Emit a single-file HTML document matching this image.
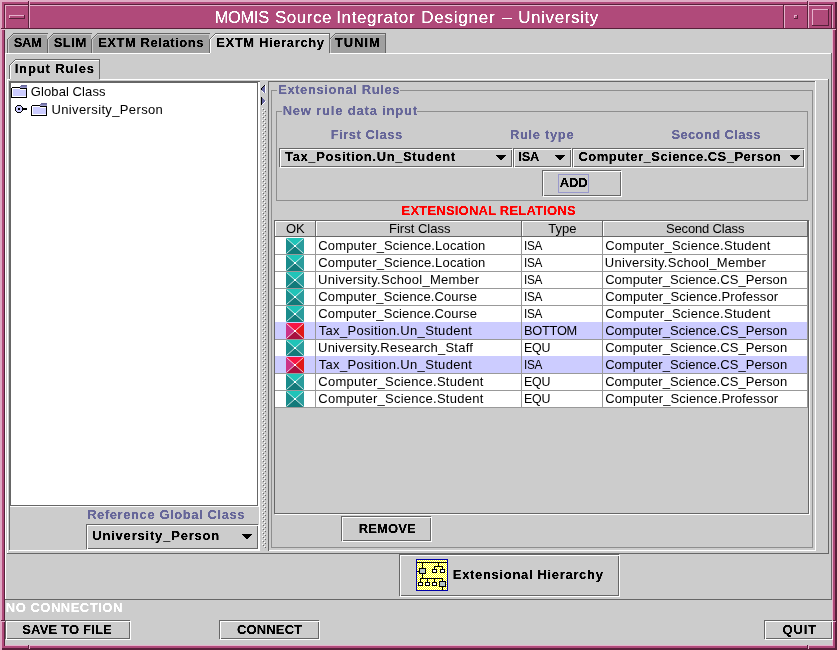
<!DOCTYPE html>
<html><head><meta charset="utf-8"><title>MOMIS</title>
<style>html,body{margin:0;padding:0;width:837px;height:650px;overflow:hidden;background:#cccccc;font-family:"Liberation Sans",sans-serif}</style>
</head><body><svg width="837" height="650" viewBox="0 0 837 650" shape-rendering="crispEdges" style="display:block;will-change:transform;font-family:'Liberation Sans',sans-serif"><defs><pattern id="ydith" x="0" y="0" width="2" height="2" patternUnits="userSpaceOnUse"><rect width="2" height="2" fill="#ffff00"/><rect width="1" height="1" fill="#ffffff"/><rect x="1" y="1" width="1" height="1" fill="#ffffff"/></pattern><filter id="crisp" x="0" y="0" width="837" height="650" filterUnits="userSpaceOnUse"><feComponentTransfer><feFuncA type="linear" slope="2.2" intercept="-0.35"/></feComponentTransfer></filter><filter id="crisp2" x="0" y="0" width="837" height="650" filterUnits="userSpaceOnUse"><feComponentTransfer><feFuncA type="linear" slope="1.0" intercept="0"/></feComponentTransfer></filter></defs><rect x="0" y="0" width="837" height="650" fill="#dfaac4"/><rect x="2" y="2" width="833" height="646" fill="#b04a7a"/><rect x="2" y="2" width="835" height="648" fill="#b04a7a"/><rect x="835" y="2" width="2" height="648" fill="#58203a"/><rect x="2" y="648" width="835" height="2" fill="#58203a"/><rect x="4" y="4" width="829" height="642" fill="#58203a"/><rect x="5" y="5" width="828" height="641" fill="#e6b2cc"/><rect x="5" y="5" width="827" height="640" fill="#cccccc"/><rect x="5" y="5" width="827" height="24" fill="#b04a7a"/><rect x="5" y="5" width="23" height="1" fill="#e6b2cc"/><rect x="5" y="5" width="1" height="23" fill="#e6b2cc"/><rect x="5" y="28" width="24" height="1" fill="#58203a"/><rect x="28" y="1" width="1" height="28" fill="#58203a"/><rect x="29" y="1" width="1" height="29" fill="#e6b2cc"/><rect x="9" y="15" width="15" height="1" fill="#e6b2cc"/><rect x="9" y="15" width="1" height="3" fill="#e6b2cc"/><rect x="9" y="18" width="16" height="1" fill="#58203a"/><rect x="24" y="15" width="1" height="4" fill="#58203a"/><rect x="29" y="5" width="754" height="1" fill="#e6b2cc"/><rect x="29" y="28" width="755" height="1" fill="#58203a"/><rect x="783" y="5" width="1" height="24" fill="#58203a"/><rect x="784" y="5" width="1" height="24" fill="#e6b2cc"/><rect x="784" y="5" width="23" height="1" fill="#e6b2cc"/><rect x="784" y="28" width="24" height="1" fill="#58203a"/><rect x="807" y="1" width="1" height="28" fill="#58203a"/><rect x="808" y="1" width="1" height="28" fill="#e6b2cc"/><rect x="794" y="15" width="3" height="1" fill="#e6b2cc"/><rect x="794" y="15" width="1" height="3" fill="#e6b2cc"/><rect x="794" y="18" width="4" height="1" fill="#58203a"/><rect x="797" y="15" width="1" height="4" fill="#58203a"/><rect x="808" y="5" width="23" height="1" fill="#e6b2cc"/><rect x="808" y="28" width="24" height="1" fill="#58203a"/><rect x="831" y="5" width="1" height="24" fill="#58203a"/><rect x="812" y="9" width="16" height="1" fill="#e6b2cc"/><rect x="812" y="9" width="1" height="16" fill="#e6b2cc"/><rect x="812" y="25" width="17" height="1" fill="#58203a"/><rect x="828" y="9" width="1" height="17" fill="#58203a"/><rect x="1" y="28" width="4" height="1" fill="#58203a"/><rect x="1" y="29" width="4" height="1" fill="#e6b2cc"/><rect x="832" y="28" width="4" height="1" fill="#58203a"/><rect x="832" y="29" width="4" height="1" fill="#e6b2cc"/><rect x="1" y="620" width="4" height="1" fill="#58203a"/><rect x="1" y="621" width="4" height="1" fill="#e6b2cc"/><rect x="832" y="620" width="4" height="1" fill="#58203a"/><rect x="832" y="621" width="4" height="1" fill="#e6b2cc"/><rect x="28" y="645" width="1" height="4" fill="#58203a"/><rect x="29" y="645" width="1" height="4" fill="#e6b2cc"/><rect x="807" y="645" width="1" height="4" fill="#58203a"/><rect x="808" y="645" width="1" height="4" fill="#e6b2cc"/><rect x="502" y="18" width="10" height="1" fill="#ffffff"/><rect x="5" y="33" width="826" height="20" fill="#cccccc"/><rect x="8" y="34" width="39" height="19" fill="#a0a0a0"/><rect x="8" y="33" width="6" height="1" fill="#cccccc"/><rect x="8" y="34" width="5" height="1" fill="#cccccc"/><rect x="8" y="35" width="4" height="1" fill="#cccccc"/><rect x="8" y="36" width="3" height="1" fill="#cccccc"/><rect x="8" y="37" width="2" height="1" fill="#cccccc"/><rect x="8" y="38" width="1" height="1" fill="#cccccc"/><rect x="7" y="39" width="1" height="14" fill="#666666"/><rect x="8" y="38" width="1" height="1" fill="#666666"/><rect x="9" y="37" width="1" height="1" fill="#666666"/><rect x="10" y="36" width="1" height="1" fill="#666666"/><rect x="11" y="35" width="1" height="1" fill="#666666"/><rect x="12" y="34" width="1" height="1" fill="#666666"/><rect x="13" y="33" width="1" height="1" fill="#666666"/><rect x="13" y="33" width="35" height="1" fill="#666666"/><rect x="8" y="39" width="1" height="14" fill="#cccccc"/><rect x="8" y="39" width="1" height="1" fill="#cccccc"/><rect x="9" y="38" width="1" height="1" fill="#cccccc"/><rect x="10" y="37" width="1" height="1" fill="#cccccc"/><rect x="11" y="36" width="1" height="1" fill="#cccccc"/><rect x="12" y="35" width="1" height="1" fill="#cccccc"/><rect x="13" y="34" width="1" height="1" fill="#cccccc"/><rect x="13" y="34" width="34" height="1" fill="#cccccc"/><rect x="48" y="34" width="43" height="19" fill="#a0a0a0"/><rect x="48" y="33" width="6" height="1" fill="#cccccc"/><rect x="48" y="34" width="5" height="1" fill="#cccccc"/><rect x="48" y="35" width="4" height="1" fill="#cccccc"/><rect x="48" y="36" width="3" height="1" fill="#cccccc"/><rect x="48" y="37" width="2" height="1" fill="#cccccc"/><rect x="48" y="38" width="1" height="1" fill="#cccccc"/><rect x="47" y="39" width="1" height="14" fill="#666666"/><rect x="48" y="38" width="1" height="1" fill="#666666"/><rect x="49" y="37" width="1" height="1" fill="#666666"/><rect x="50" y="36" width="1" height="1" fill="#666666"/><rect x="51" y="35" width="1" height="1" fill="#666666"/><rect x="52" y="34" width="1" height="1" fill="#666666"/><rect x="53" y="33" width="1" height="1" fill="#666666"/><rect x="53" y="33" width="39" height="1" fill="#666666"/><rect x="48" y="39" width="1" height="14" fill="#cccccc"/><rect x="48" y="39" width="1" height="1" fill="#cccccc"/><rect x="49" y="38" width="1" height="1" fill="#cccccc"/><rect x="50" y="37" width="1" height="1" fill="#cccccc"/><rect x="51" y="36" width="1" height="1" fill="#cccccc"/><rect x="52" y="35" width="1" height="1" fill="#cccccc"/><rect x="53" y="34" width="1" height="1" fill="#cccccc"/><rect x="53" y="34" width="38" height="1" fill="#cccccc"/><rect x="92" y="34" width="117" height="19" fill="#a0a0a0"/><rect x="92" y="33" width="6" height="1" fill="#cccccc"/><rect x="92" y="34" width="5" height="1" fill="#cccccc"/><rect x="92" y="35" width="4" height="1" fill="#cccccc"/><rect x="92" y="36" width="3" height="1" fill="#cccccc"/><rect x="92" y="37" width="2" height="1" fill="#cccccc"/><rect x="92" y="38" width="1" height="1" fill="#cccccc"/><rect x="91" y="39" width="1" height="14" fill="#666666"/><rect x="92" y="38" width="1" height="1" fill="#666666"/><rect x="93" y="37" width="1" height="1" fill="#666666"/><rect x="94" y="36" width="1" height="1" fill="#666666"/><rect x="95" y="35" width="1" height="1" fill="#666666"/><rect x="96" y="34" width="1" height="1" fill="#666666"/><rect x="97" y="33" width="1" height="1" fill="#666666"/><rect x="97" y="33" width="113" height="1" fill="#666666"/><rect x="92" y="39" width="1" height="14" fill="#cccccc"/><rect x="92" y="39" width="1" height="1" fill="#cccccc"/><rect x="93" y="38" width="1" height="1" fill="#cccccc"/><rect x="94" y="37" width="1" height="1" fill="#cccccc"/><rect x="95" y="36" width="1" height="1" fill="#cccccc"/><rect x="96" y="35" width="1" height="1" fill="#cccccc"/><rect x="97" y="34" width="1" height="1" fill="#cccccc"/><rect x="97" y="34" width="112" height="1" fill="#cccccc"/><rect x="330" y="34" width="55" height="19" fill="#a0a0a0"/><rect x="330" y="33" width="6" height="1" fill="#cccccc"/><rect x="330" y="34" width="5" height="1" fill="#cccccc"/><rect x="330" y="35" width="4" height="1" fill="#cccccc"/><rect x="330" y="36" width="3" height="1" fill="#cccccc"/><rect x="330" y="37" width="2" height="1" fill="#cccccc"/><rect x="330" y="38" width="1" height="1" fill="#cccccc"/><rect x="329" y="39" width="1" height="14" fill="#666666"/><rect x="330" y="38" width="1" height="1" fill="#666666"/><rect x="331" y="37" width="1" height="1" fill="#666666"/><rect x="332" y="36" width="1" height="1" fill="#666666"/><rect x="333" y="35" width="1" height="1" fill="#666666"/><rect x="334" y="34" width="1" height="1" fill="#666666"/><rect x="335" y="33" width="1" height="1" fill="#666666"/><rect x="335" y="33" width="51" height="1" fill="#666666"/><rect x="385" y="34" width="1" height="19" fill="#666666"/><rect x="330" y="39" width="1" height="14" fill="#cccccc"/><rect x="330" y="39" width="1" height="1" fill="#cccccc"/><rect x="331" y="38" width="1" height="1" fill="#cccccc"/><rect x="332" y="37" width="1" height="1" fill="#cccccc"/><rect x="333" y="36" width="1" height="1" fill="#cccccc"/><rect x="334" y="35" width="1" height="1" fill="#cccccc"/><rect x="335" y="34" width="1" height="1" fill="#cccccc"/><rect x="335" y="34" width="50" height="1" fill="#cccccc"/><rect x="210" y="34" width="119" height="19" fill="#cccccc"/><rect x="210" y="33" width="6" height="1" fill="#cccccc"/><rect x="210" y="34" width="5" height="1" fill="#cccccc"/><rect x="210" y="35" width="4" height="1" fill="#cccccc"/><rect x="210" y="36" width="3" height="1" fill="#cccccc"/><rect x="210" y="37" width="2" height="1" fill="#cccccc"/><rect x="210" y="38" width="1" height="1" fill="#cccccc"/><rect x="209" y="39" width="1" height="14" fill="#666666"/><rect x="210" y="38" width="1" height="1" fill="#666666"/><rect x="211" y="37" width="1" height="1" fill="#666666"/><rect x="212" y="36" width="1" height="1" fill="#666666"/><rect x="213" y="35" width="1" height="1" fill="#666666"/><rect x="214" y="34" width="1" height="1" fill="#666666"/><rect x="215" y="33" width="1" height="1" fill="#666666"/><rect x="215" y="33" width="115" height="1" fill="#666666"/><rect x="210" y="39" width="1" height="14" fill="#ffffff"/><rect x="210" y="39" width="1" height="1" fill="#ffffff"/><rect x="211" y="38" width="1" height="1" fill="#ffffff"/><rect x="212" y="37" width="1" height="1" fill="#ffffff"/><rect x="213" y="36" width="1" height="1" fill="#ffffff"/><rect x="214" y="35" width="1" height="1" fill="#ffffff"/><rect x="215" y="34" width="1" height="1" fill="#ffffff"/><rect x="215" y="34" width="114" height="1" fill="#ffffff"/><rect x="329" y="34" width="1" height="19" fill="#666666"/><rect x="5" y="53" width="205" height="1" fill="#ffffff"/><rect x="330" y="53" width="501" height="1" fill="#ffffff"/><rect x="5" y="53" width="1" height="546" fill="#ffffff"/><rect x="5" y="599" width="827" height="1" fill="#666666"/><rect x="831" y="53" width="1" height="547" fill="#666666"/><rect x="10" y="60" width="89" height="19" fill="#cccccc"/><rect x="10" y="59" width="6" height="1" fill="#cccccc"/><rect x="10" y="60" width="5" height="1" fill="#cccccc"/><rect x="10" y="61" width="4" height="1" fill="#cccccc"/><rect x="10" y="62" width="3" height="1" fill="#cccccc"/><rect x="10" y="63" width="2" height="1" fill="#cccccc"/><rect x="10" y="64" width="1" height="1" fill="#cccccc"/><rect x="9" y="65" width="1" height="14" fill="#666666"/><rect x="10" y="64" width="1" height="1" fill="#666666"/><rect x="11" y="63" width="1" height="1" fill="#666666"/><rect x="12" y="62" width="1" height="1" fill="#666666"/><rect x="13" y="61" width="1" height="1" fill="#666666"/><rect x="14" y="60" width="1" height="1" fill="#666666"/><rect x="15" y="59" width="1" height="1" fill="#666666"/><rect x="15" y="59" width="85" height="1" fill="#666666"/><rect x="99" y="60" width="1" height="19" fill="#666666"/><rect x="10" y="65" width="1" height="14" fill="#ffffff"/><rect x="10" y="65" width="1" height="1" fill="#ffffff"/><rect x="11" y="64" width="1" height="1" fill="#ffffff"/><rect x="12" y="63" width="1" height="1" fill="#ffffff"/><rect x="13" y="62" width="1" height="1" fill="#ffffff"/><rect x="14" y="61" width="1" height="1" fill="#ffffff"/><rect x="15" y="60" width="1" height="1" fill="#ffffff"/><rect x="15" y="60" width="84" height="1" fill="#ffffff"/><rect x="7" y="79" width="3" height="1" fill="#ffffff"/><rect x="100" y="79" width="728" height="1" fill="#ffffff"/><rect x="7" y="79" width="1" height="474" fill="#ffffff"/><rect x="7" y="553" width="822" height="1" fill="#666666"/><rect x="828" y="79" width="1" height="475" fill="#666666"/><rect x="11" y="83" width="246" height="422" fill="#ffffff"/><rect x="9" y="81" width="1" height="469" fill="#666666"/><rect x="9" y="81" width="251" height="1" fill="#666666"/><rect x="10" y="82" width="1" height="424" fill="#666666"/><rect x="10" y="82" width="248" height="1" fill="#666666"/><rect x="257" y="82" width="1" height="424" fill="#666666"/><rect x="10" y="505" width="248" height="1" fill="#666666"/><rect x="258" y="82" width="1" height="425" fill="#ffffff"/><rect x="10" y="506" width="249" height="1" fill="#ffffff"/><rect x="259" y="82" width="1" height="469" fill="#ffffff"/><rect x="9" y="550" width="251" height="1" fill="#ffffff"/><rect x="21" y="85" width="6" height="1" fill="#666699"/><rect x="20" y="86" width="7" height="1" fill="#7a7ab0"/><rect x="12" y="87" width="8" height="1" fill="#000"/><rect x="20" y="87" width="7" height="1" fill="#9999cc"/><rect x="20" y="88" width="7" height="1" fill="#000"/><rect x="12" y="88" width="8" height="1" fill="#ffffff"/><rect x="11" y="88" width="1" height="10" fill="#000"/><rect x="26" y="88" width="1" height="10" fill="#000"/><rect x="12" y="89" width="1" height="8" fill="#ffffff"/><rect x="13" y="89" width="7" height="1" fill="#ccccff"/><rect x="20" y="89" width="6" height="1" fill="#ffffff"/><rect x="13" y="90" width="13" height="6" fill="#ccccff"/><rect x="12" y="96" width="14" height="1" fill="#ffffff"/><rect x="11" y="97" width="16" height="1" fill="#000"/><rect x="41" y="103" width="6" height="1" fill="#666699"/><rect x="40" y="104" width="7" height="1" fill="#7a7ab0"/><rect x="32" y="105" width="8" height="1" fill="#000"/><rect x="40" y="105" width="7" height="1" fill="#9999cc"/><rect x="40" y="106" width="7" height="1" fill="#000"/><rect x="32" y="106" width="8" height="1" fill="#ffffff"/><rect x="31" y="106" width="1" height="10" fill="#000"/><rect x="46" y="106" width="1" height="10" fill="#000"/><rect x="32" y="107" width="1" height="8" fill="#ffffff"/><rect x="33" y="107" width="7" height="1" fill="#ccccff"/><rect x="40" y="107" width="6" height="1" fill="#ffffff"/><rect x="33" y="108" width="13" height="6" fill="#ccccff"/><rect x="32" y="114" width="14" height="1" fill="#ffffff"/><rect x="31" y="115" width="16" height="1" fill="#000"/><rect x="17" y="105" width="4" height="1" fill="#000"/><rect x="17" y="112" width="4" height="1" fill="#000"/><rect x="16" y="106" width="1" height="1" fill="#000"/><rect x="21" y="106" width="1" height="1" fill="#000"/><rect x="16" y="111" width="1" height="1" fill="#000"/><rect x="21" y="111" width="1" height="1" fill="#000"/><rect x="15" y="107" width="1" height="4" fill="#000"/><rect x="22" y="107" width="1" height="4" fill="#000"/><rect x="17" y="106" width="4" height="6" fill="#ccccff"/><rect x="16" y="107" width="6" height="4" fill="#ccccff"/><rect x="18" y="108" width="2" height="2" fill="#000"/><rect x="23" y="108" width="4" height="2" fill="#000"/><rect x="86" y="524" width="172" height="1" fill="#666666"/><rect x="86" y="524" width="1" height="25" fill="#666666"/><rect x="86" y="548" width="172" height="1" fill="#666666"/><rect x="257" y="524" width="1" height="25" fill="#666666"/><rect x="87" y="525" width="172" height="1" fill="#ffffff"/><rect x="87" y="525" width="1" height="25" fill="#ffffff"/><rect x="87" y="549" width="172" height="1" fill="#ffffff"/><rect x="258" y="525" width="1" height="25" fill="#ffffff"/><rect x="86" y="549" width="1" height="1" fill="#cccccc"/><rect x="258" y="524" width="1" height="1" fill="#cccccc"/><rect x="242" y="534" width="10" height="1" fill="#000"/><rect x="243" y="535" width="8" height="1" fill="#000"/><rect x="244" y="536" width="6" height="1" fill="#000"/><rect x="245" y="537" width="4" height="1" fill="#000"/><rect x="246" y="538" width="2" height="1" fill="#000"/><rect x="264" y="85" width="1" height="1" fill="#6666a0"/><rect x="263" y="86" width="2" height="1" fill="#6666a0"/><rect x="262" y="87" width="3" height="1" fill="#6666a0"/><rect x="261" y="88" width="4" height="1" fill="#6666a0"/><rect x="261" y="89" width="4" height="1" fill="#6666a0"/><rect x="262" y="90" width="3" height="1" fill="#6666a0"/><rect x="263" y="91" width="2" height="1" fill="#6666a0"/><rect x="264" y="92" width="1" height="1" fill="#6666a0"/><rect x="264" y="85" width="1" height="1" fill="#000"/><rect x="263" y="86" width="1" height="1" fill="#000"/><rect x="262" y="87" width="1" height="1" fill="#000"/><rect x="261" y="88" width="1" height="1" fill="#000"/><rect x="261" y="89" width="1" height="1" fill="#000"/><rect x="265" y="85" width="1" height="8" fill="#ffffff"/><rect x="262" y="91" width="1" height="1" fill="#ffffff"/><rect x="263" y="92" width="1" height="1" fill="#ffffff"/><rect x="262" y="98" width="1" height="1" fill="#6666a0"/><rect x="262" y="99" width="2" height="1" fill="#6666a0"/><rect x="262" y="100" width="3" height="1" fill="#6666a0"/><rect x="262" y="101" width="3" height="1" fill="#6666a0"/><rect x="262" y="102" width="2" height="1" fill="#6666a0"/><rect x="262" y="103" width="1" height="1" fill="#6666a0"/><rect x="261" y="97" width="1" height="8" fill="#000"/><rect x="262" y="104" width="1" height="1" fill="#ffffff"/><rect x="263" y="103" width="1" height="1" fill="#ffffff"/><rect x="264" y="102" width="1" height="1" fill="#ffffff"/><rect x="265" y="101" width="1" height="1" fill="#ffffff"/><rect x="262" y="108" width="1" height="1" fill="#ffffff"/><rect x="263" y="109" width="1" height="1" fill="#666666"/><rect x="264" y="110" width="1" height="1" fill="#ffffff"/><rect x="265" y="111" width="1" height="1" fill="#666666"/><rect x="262" y="112" width="1" height="1" fill="#ffffff"/><rect x="263" y="113" width="1" height="1" fill="#666666"/><rect x="264" y="114" width="1" height="1" fill="#ffffff"/><rect x="265" y="115" width="1" height="1" fill="#666666"/><rect x="262" y="116" width="1" height="1" fill="#ffffff"/><rect x="263" y="117" width="1" height="1" fill="#666666"/><rect x="264" y="118" width="1" height="1" fill="#ffffff"/><rect x="265" y="119" width="1" height="1" fill="#666666"/><rect x="262" y="120" width="1" height="1" fill="#ffffff"/><rect x="263" y="121" width="1" height="1" fill="#666666"/><rect x="264" y="122" width="1" height="1" fill="#ffffff"/><rect x="265" y="123" width="1" height="1" fill="#666666"/><rect x="262" y="124" width="1" height="1" fill="#ffffff"/><rect x="263" y="125" width="1" height="1" fill="#666666"/><rect x="264" y="126" width="1" height="1" fill="#ffffff"/><rect x="265" y="127" width="1" height="1" fill="#666666"/><rect x="262" y="128" width="1" height="1" fill="#ffffff"/><rect x="263" y="129" width="1" height="1" fill="#666666"/><rect x="264" y="130" width="1" height="1" fill="#ffffff"/><rect x="265" y="131" width="1" height="1" fill="#666666"/><rect x="262" y="132" width="1" height="1" fill="#ffffff"/><rect x="263" y="133" width="1" height="1" fill="#666666"/><rect x="264" y="134" width="1" height="1" fill="#ffffff"/><rect x="265" y="135" width="1" height="1" fill="#666666"/><rect x="262" y="136" width="1" height="1" fill="#ffffff"/><rect x="263" y="137" width="1" height="1" fill="#666666"/><rect x="264" y="138" width="1" height="1" fill="#ffffff"/><rect x="265" y="139" width="1" height="1" fill="#666666"/><rect x="262" y="140" width="1" height="1" fill="#ffffff"/><rect x="263" y="141" width="1" height="1" fill="#666666"/><rect x="264" y="142" width="1" height="1" fill="#ffffff"/><rect x="265" y="143" width="1" height="1" fill="#666666"/><rect x="262" y="144" width="1" height="1" fill="#ffffff"/><rect x="263" y="145" width="1" height="1" fill="#666666"/><rect x="264" y="146" width="1" height="1" fill="#ffffff"/><rect x="265" y="147" width="1" height="1" fill="#666666"/><rect x="262" y="148" width="1" height="1" fill="#ffffff"/><rect x="263" y="149" width="1" height="1" fill="#666666"/><rect x="264" y="150" width="1" height="1" fill="#ffffff"/><rect x="265" y="151" width="1" height="1" fill="#666666"/><rect x="262" y="152" width="1" height="1" fill="#ffffff"/><rect x="263" y="153" width="1" height="1" fill="#666666"/><rect x="264" y="154" width="1" height="1" fill="#ffffff"/><rect x="265" y="155" width="1" height="1" fill="#666666"/><rect x="262" y="156" width="1" height="1" fill="#ffffff"/><rect x="263" y="157" width="1" height="1" fill="#666666"/><rect x="264" y="158" width="1" height="1" fill="#ffffff"/><rect x="265" y="159" width="1" height="1" fill="#666666"/><rect x="262" y="160" width="1" height="1" fill="#ffffff"/><rect x="263" y="161" width="1" height="1" fill="#666666"/><rect x="264" y="162" width="1" height="1" fill="#ffffff"/><rect x="265" y="163" width="1" height="1" fill="#666666"/><rect x="262" y="164" width="1" height="1" fill="#ffffff"/><rect x="263" y="165" width="1" height="1" fill="#666666"/><rect x="264" y="166" width="1" height="1" fill="#ffffff"/><rect x="265" y="167" width="1" height="1" fill="#666666"/><rect x="262" y="168" width="1" height="1" fill="#ffffff"/><rect x="263" y="169" width="1" height="1" fill="#666666"/><rect x="264" y="170" width="1" height="1" fill="#ffffff"/><rect x="265" y="171" width="1" height="1" fill="#666666"/><rect x="262" y="172" width="1" height="1" fill="#ffffff"/><rect x="263" y="173" width="1" height="1" fill="#666666"/><rect x="264" y="174" width="1" height="1" fill="#ffffff"/><rect x="265" y="175" width="1" height="1" fill="#666666"/><rect x="262" y="176" width="1" height="1" fill="#ffffff"/><rect x="263" y="177" width="1" height="1" fill="#666666"/><rect x="264" y="178" width="1" height="1" fill="#ffffff"/><rect x="265" y="179" width="1" height="1" fill="#666666"/><rect x="262" y="180" width="1" height="1" fill="#ffffff"/><rect x="263" y="181" width="1" height="1" fill="#666666"/><rect x="264" y="182" width="1" height="1" fill="#ffffff"/><rect x="265" y="183" width="1" height="1" fill="#666666"/><rect x="262" y="184" width="1" height="1" fill="#ffffff"/><rect x="263" y="185" width="1" height="1" fill="#666666"/><rect x="264" y="186" width="1" height="1" fill="#ffffff"/><rect x="265" y="187" width="1" height="1" fill="#666666"/><rect x="262" y="188" width="1" height="1" fill="#ffffff"/><rect x="263" y="189" width="1" height="1" fill="#666666"/><rect x="264" y="190" width="1" height="1" fill="#ffffff"/><rect x="265" y="191" width="1" height="1" fill="#666666"/><rect x="262" y="192" width="1" height="1" fill="#ffffff"/><rect x="263" y="193" width="1" height="1" fill="#666666"/><rect x="264" y="194" width="1" height="1" fill="#ffffff"/><rect x="265" y="195" width="1" height="1" fill="#666666"/><rect x="262" y="196" width="1" height="1" fill="#ffffff"/><rect x="263" y="197" width="1" height="1" fill="#666666"/><rect x="264" y="198" width="1" height="1" fill="#ffffff"/><rect x="265" y="199" width="1" height="1" fill="#666666"/><rect x="262" y="200" width="1" height="1" fill="#ffffff"/><rect x="263" y="201" width="1" height="1" fill="#666666"/><rect x="264" y="202" width="1" height="1" fill="#ffffff"/><rect x="265" y="203" width="1" height="1" fill="#666666"/><rect x="262" y="204" width="1" height="1" fill="#ffffff"/><rect x="263" y="205" width="1" height="1" fill="#666666"/><rect x="264" y="206" width="1" height="1" fill="#ffffff"/><rect x="265" y="207" width="1" height="1" fill="#666666"/><rect x="262" y="208" width="1" height="1" fill="#ffffff"/><rect x="263" y="209" width="1" height="1" fill="#666666"/><rect x="264" y="210" width="1" height="1" fill="#ffffff"/><rect x="265" y="211" width="1" height="1" fill="#666666"/><rect x="262" y="212" width="1" height="1" fill="#ffffff"/><rect x="263" y="213" width="1" height="1" fill="#666666"/><rect x="264" y="214" width="1" height="1" fill="#ffffff"/><rect x="265" y="215" width="1" height="1" fill="#666666"/><rect x="262" y="216" width="1" height="1" fill="#ffffff"/><rect x="263" y="217" width="1" height="1" fill="#666666"/><rect x="264" y="218" width="1" height="1" fill="#ffffff"/><rect x="265" y="219" width="1" height="1" fill="#666666"/><rect x="262" y="220" width="1" height="1" fill="#ffffff"/><rect x="263" y="221" width="1" height="1" fill="#666666"/><rect x="264" y="222" width="1" height="1" fill="#ffffff"/><rect x="265" y="223" width="1" height="1" fill="#666666"/><rect x="262" y="224" width="1" height="1" fill="#ffffff"/><rect x="263" y="225" width="1" height="1" fill="#666666"/><rect x="264" y="226" width="1" height="1" fill="#ffffff"/><rect x="265" y="227" width="1" height="1" fill="#666666"/><rect x="262" y="228" width="1" height="1" fill="#ffffff"/><rect x="263" y="229" width="1" height="1" fill="#666666"/><rect x="264" y="230" width="1" height="1" fill="#ffffff"/><rect x="265" y="231" width="1" height="1" fill="#666666"/><rect x="262" y="232" width="1" height="1" fill="#ffffff"/><rect x="263" y="233" width="1" height="1" fill="#666666"/><rect x="264" y="234" width="1" height="1" fill="#ffffff"/><rect x="265" y="235" width="1" height="1" fill="#666666"/><rect x="262" y="236" width="1" height="1" fill="#ffffff"/><rect x="263" y="237" width="1" height="1" fill="#666666"/><rect x="264" y="238" width="1" height="1" fill="#ffffff"/><rect x="265" y="239" width="1" height="1" fill="#666666"/><rect x="262" y="240" width="1" height="1" fill="#ffffff"/><rect x="263" y="241" width="1" height="1" fill="#666666"/><rect x="264" y="242" width="1" height="1" fill="#ffffff"/><rect x="265" y="243" width="1" height="1" fill="#666666"/><rect x="262" y="244" width="1" height="1" fill="#ffffff"/><rect x="263" y="245" width="1" height="1" fill="#666666"/><rect x="264" y="246" width="1" height="1" fill="#ffffff"/><rect x="265" y="247" width="1" height="1" fill="#666666"/><rect x="262" y="248" width="1" height="1" fill="#ffffff"/><rect x="263" y="249" width="1" height="1" fill="#666666"/><rect x="264" y="250" width="1" height="1" fill="#ffffff"/><rect x="265" y="251" width="1" height="1" fill="#666666"/><rect x="262" y="252" width="1" height="1" fill="#ffffff"/><rect x="263" y="253" width="1" height="1" fill="#666666"/><rect x="264" y="254" width="1" height="1" fill="#ffffff"/><rect x="265" y="255" width="1" height="1" fill="#666666"/><rect x="262" y="256" width="1" height="1" fill="#ffffff"/><rect x="263" y="257" width="1" height="1" fill="#666666"/><rect x="264" y="258" width="1" height="1" fill="#ffffff"/><rect x="265" y="259" width="1" height="1" fill="#666666"/><rect x="262" y="260" width="1" height="1" fill="#ffffff"/><rect x="263" y="261" width="1" height="1" fill="#666666"/><rect x="264" y="262" width="1" height="1" fill="#ffffff"/><rect x="265" y="263" width="1" height="1" fill="#666666"/><rect x="262" y="264" width="1" height="1" fill="#ffffff"/><rect x="263" y="265" width="1" height="1" fill="#666666"/><rect x="264" y="266" width="1" height="1" fill="#ffffff"/><rect x="265" y="267" width="1" height="1" fill="#666666"/><rect x="262" y="268" width="1" height="1" fill="#ffffff"/><rect x="263" y="269" width="1" height="1" fill="#666666"/><rect x="264" y="270" width="1" height="1" fill="#ffffff"/><rect x="265" y="271" width="1" height="1" fill="#666666"/><rect x="262" y="272" width="1" height="1" fill="#ffffff"/><rect x="263" y="273" width="1" height="1" fill="#666666"/><rect x="264" y="274" width="1" height="1" fill="#ffffff"/><rect x="265" y="275" width="1" height="1" fill="#666666"/><rect x="262" y="276" width="1" height="1" fill="#ffffff"/><rect x="263" y="277" width="1" height="1" fill="#666666"/><rect x="264" y="278" width="1" height="1" fill="#ffffff"/><rect x="265" y="279" width="1" height="1" fill="#666666"/><rect x="262" y="280" width="1" height="1" fill="#ffffff"/><rect x="263" y="281" width="1" height="1" fill="#666666"/><rect x="264" y="282" width="1" height="1" fill="#ffffff"/><rect x="265" y="283" width="1" height="1" fill="#666666"/><rect x="262" y="284" width="1" height="1" fill="#ffffff"/><rect x="263" y="285" width="1" height="1" fill="#666666"/><rect x="264" y="286" width="1" height="1" fill="#ffffff"/><rect x="265" y="287" width="1" height="1" fill="#666666"/><rect x="262" y="288" width="1" height="1" fill="#ffffff"/><rect x="263" y="289" width="1" height="1" fill="#666666"/><rect x="264" y="290" width="1" height="1" fill="#ffffff"/><rect x="265" y="291" width="1" height="1" fill="#666666"/><rect x="262" y="292" width="1" height="1" fill="#ffffff"/><rect x="263" y="293" width="1" height="1" fill="#666666"/><rect x="264" y="294" width="1" height="1" fill="#ffffff"/><rect x="265" y="295" width="1" height="1" fill="#666666"/><rect x="262" y="296" width="1" height="1" fill="#ffffff"/><rect x="263" y="297" width="1" height="1" fill="#666666"/><rect x="264" y="298" width="1" height="1" fill="#ffffff"/><rect x="265" y="299" width="1" height="1" fill="#666666"/><rect x="262" y="300" width="1" height="1" fill="#ffffff"/><rect x="263" y="301" width="1" height="1" fill="#666666"/><rect x="264" y="302" width="1" height="1" fill="#ffffff"/><rect x="265" y="303" width="1" height="1" fill="#666666"/><rect x="262" y="304" width="1" height="1" fill="#ffffff"/><rect x="263" y="305" width="1" height="1" fill="#666666"/><rect x="264" y="306" width="1" height="1" fill="#ffffff"/><rect x="265" y="307" width="1" height="1" fill="#666666"/><rect x="262" y="308" width="1" height="1" fill="#ffffff"/><rect x="263" y="309" width="1" height="1" fill="#666666"/><rect x="264" y="310" width="1" height="1" fill="#ffffff"/><rect x="265" y="311" width="1" height="1" fill="#666666"/><rect x="262" y="312" width="1" height="1" fill="#ffffff"/><rect x="263" y="313" width="1" height="1" fill="#666666"/><rect x="264" y="314" width="1" height="1" fill="#ffffff"/><rect x="265" y="315" width="1" height="1" fill="#666666"/><rect x="262" y="316" width="1" height="1" fill="#ffffff"/><rect x="263" y="317" width="1" height="1" fill="#666666"/><rect x="264" y="318" width="1" height="1" fill="#ffffff"/><rect x="265" y="319" width="1" height="1" fill="#666666"/><rect x="262" y="320" width="1" height="1" fill="#ffffff"/><rect x="263" y="321" width="1" height="1" fill="#666666"/><rect x="264" y="322" width="1" height="1" fill="#ffffff"/><rect x="265" y="323" width="1" height="1" fill="#666666"/><rect x="262" y="324" width="1" height="1" fill="#ffffff"/><rect x="263" y="325" width="1" height="1" fill="#666666"/><rect x="264" y="326" width="1" height="1" fill="#ffffff"/><rect x="265" y="327" width="1" height="1" fill="#666666"/><rect x="262" y="328" width="1" height="1" fill="#ffffff"/><rect x="263" y="329" width="1" height="1" fill="#666666"/><rect x="264" y="330" width="1" height="1" fill="#ffffff"/><rect x="265" y="331" width="1" height="1" fill="#666666"/><rect x="262" y="332" width="1" height="1" fill="#ffffff"/><rect x="263" y="333" width="1" height="1" fill="#666666"/><rect x="264" y="334" width="1" height="1" fill="#ffffff"/><rect x="265" y="335" width="1" height="1" fill="#666666"/><rect x="262" y="336" width="1" height="1" fill="#ffffff"/><rect x="263" y="337" width="1" height="1" fill="#666666"/><rect x="264" y="338" width="1" height="1" fill="#ffffff"/><rect x="265" y="339" width="1" height="1" fill="#666666"/><rect x="262" y="340" width="1" height="1" fill="#ffffff"/><rect x="263" y="341" width="1" height="1" fill="#666666"/><rect x="264" y="342" width="1" height="1" fill="#ffffff"/><rect x="265" y="343" width="1" height="1" fill="#666666"/><rect x="262" y="344" width="1" height="1" fill="#ffffff"/><rect x="263" y="345" width="1" height="1" fill="#666666"/><rect x="264" y="346" width="1" height="1" fill="#ffffff"/><rect x="265" y="347" width="1" height="1" fill="#666666"/><rect x="262" y="348" width="1" height="1" fill="#ffffff"/><rect x="263" y="349" width="1" height="1" fill="#666666"/><rect x="264" y="350" width="1" height="1" fill="#ffffff"/><rect x="265" y="351" width="1" height="1" fill="#666666"/><rect x="262" y="352" width="1" height="1" fill="#ffffff"/><rect x="263" y="353" width="1" height="1" fill="#666666"/><rect x="264" y="354" width="1" height="1" fill="#ffffff"/><rect x="265" y="355" width="1" height="1" fill="#666666"/><rect x="262" y="356" width="1" height="1" fill="#ffffff"/><rect x="263" y="357" width="1" height="1" fill="#666666"/><rect x="264" y="358" width="1" height="1" fill="#ffffff"/><rect x="265" y="359" width="1" height="1" fill="#666666"/><rect x="262" y="360" width="1" height="1" fill="#ffffff"/><rect x="263" y="361" width="1" height="1" fill="#666666"/><rect x="264" y="362" width="1" height="1" fill="#ffffff"/><rect x="265" y="363" width="1" height="1" fill="#666666"/><rect x="262" y="364" width="1" height="1" fill="#ffffff"/><rect x="263" y="365" width="1" height="1" fill="#666666"/><rect x="264" y="366" width="1" height="1" fill="#ffffff"/><rect x="265" y="367" width="1" height="1" fill="#666666"/><rect x="262" y="368" width="1" height="1" fill="#ffffff"/><rect x="263" y="369" width="1" height="1" fill="#666666"/><rect x="264" y="370" width="1" height="1" fill="#ffffff"/><rect x="265" y="371" width="1" height="1" fill="#666666"/><rect x="262" y="372" width="1" height="1" fill="#ffffff"/><rect x="263" y="373" width="1" height="1" fill="#666666"/><rect x="264" y="374" width="1" height="1" fill="#ffffff"/><rect x="265" y="375" width="1" height="1" fill="#666666"/><rect x="262" y="376" width="1" height="1" fill="#ffffff"/><rect x="263" y="377" width="1" height="1" fill="#666666"/><rect x="264" y="378" width="1" height="1" fill="#ffffff"/><rect x="265" y="379" width="1" height="1" fill="#666666"/><rect x="262" y="380" width="1" height="1" fill="#ffffff"/><rect x="263" y="381" width="1" height="1" fill="#666666"/><rect x="264" y="382" width="1" height="1" fill="#ffffff"/><rect x="265" y="383" width="1" height="1" fill="#666666"/><rect x="262" y="384" width="1" height="1" fill="#ffffff"/><rect x="263" y="385" width="1" height="1" fill="#666666"/><rect x="264" y="386" width="1" height="1" fill="#ffffff"/><rect x="265" y="387" width="1" height="1" fill="#666666"/><rect x="262" y="388" width="1" height="1" fill="#ffffff"/><rect x="263" y="389" width="1" height="1" fill="#666666"/><rect x="264" y="390" width="1" height="1" fill="#ffffff"/><rect x="265" y="391" width="1" height="1" fill="#666666"/><rect x="262" y="392" width="1" height="1" fill="#ffffff"/><rect x="263" y="393" width="1" height="1" fill="#666666"/><rect x="264" y="394" width="1" height="1" fill="#ffffff"/><rect x="265" y="395" width="1" height="1" fill="#666666"/><rect x="262" y="396" width="1" height="1" fill="#ffffff"/><rect x="263" y="397" width="1" height="1" fill="#666666"/><rect x="264" y="398" width="1" height="1" fill="#ffffff"/><rect x="265" y="399" width="1" height="1" fill="#666666"/><rect x="262" y="400" width="1" height="1" fill="#ffffff"/><rect x="263" y="401" width="1" height="1" fill="#666666"/><rect x="264" y="402" width="1" height="1" fill="#ffffff"/><rect x="265" y="403" width="1" height="1" fill="#666666"/><rect x="262" y="404" width="1" height="1" fill="#ffffff"/><rect x="263" y="405" width="1" height="1" fill="#666666"/><rect x="264" y="406" width="1" height="1" fill="#ffffff"/><rect x="265" y="407" width="1" height="1" fill="#666666"/><rect x="262" y="408" width="1" height="1" fill="#ffffff"/><rect x="263" y="409" width="1" height="1" fill="#666666"/><rect x="264" y="410" width="1" height="1" fill="#ffffff"/><rect x="265" y="411" width="1" height="1" fill="#666666"/><rect x="262" y="412" width="1" height="1" fill="#ffffff"/><rect x="263" y="413" width="1" height="1" fill="#666666"/><rect x="264" y="414" width="1" height="1" fill="#ffffff"/><rect x="265" y="415" width="1" height="1" fill="#666666"/><rect x="262" y="416" width="1" height="1" fill="#ffffff"/><rect x="263" y="417" width="1" height="1" fill="#666666"/><rect x="264" y="418" width="1" height="1" fill="#ffffff"/><rect x="265" y="419" width="1" height="1" fill="#666666"/><rect x="262" y="420" width="1" height="1" fill="#ffffff"/><rect x="263" y="421" width="1" height="1" fill="#666666"/><rect x="264" y="422" width="1" height="1" fill="#ffffff"/><rect x="265" y="423" width="1" height="1" fill="#666666"/><rect x="262" y="424" width="1" height="1" fill="#ffffff"/><rect x="263" y="425" width="1" height="1" fill="#666666"/><rect x="264" y="426" width="1" height="1" fill="#ffffff"/><rect x="265" y="427" width="1" height="1" fill="#666666"/><rect x="262" y="428" width="1" height="1" fill="#ffffff"/><rect x="263" y="429" width="1" height="1" fill="#666666"/><rect x="264" y="430" width="1" height="1" fill="#ffffff"/><rect x="265" y="431" width="1" height="1" fill="#666666"/><rect x="262" y="432" width="1" height="1" fill="#ffffff"/><rect x="263" y="433" width="1" height="1" fill="#666666"/><rect x="264" y="434" width="1" height="1" fill="#ffffff"/><rect x="265" y="435" width="1" height="1" fill="#666666"/><rect x="262" y="436" width="1" height="1" fill="#ffffff"/><rect x="263" y="437" width="1" height="1" fill="#666666"/><rect x="264" y="438" width="1" height="1" fill="#ffffff"/><rect x="265" y="439" width="1" height="1" fill="#666666"/><rect x="262" y="440" width="1" height="1" fill="#ffffff"/><rect x="263" y="441" width="1" height="1" fill="#666666"/><rect x="264" y="442" width="1" height="1" fill="#ffffff"/><rect x="265" y="443" width="1" height="1" fill="#666666"/><rect x="262" y="444" width="1" height="1" fill="#ffffff"/><rect x="263" y="445" width="1" height="1" fill="#666666"/><rect x="264" y="446" width="1" height="1" fill="#ffffff"/><rect x="265" y="447" width="1" height="1" fill="#666666"/><rect x="262" y="448" width="1" height="1" fill="#ffffff"/><rect x="263" y="449" width="1" height="1" fill="#666666"/><rect x="264" y="450" width="1" height="1" fill="#ffffff"/><rect x="265" y="451" width="1" height="1" fill="#666666"/><rect x="262" y="452" width="1" height="1" fill="#ffffff"/><rect x="263" y="453" width="1" height="1" fill="#666666"/><rect x="264" y="454" width="1" height="1" fill="#ffffff"/><rect x="265" y="455" width="1" height="1" fill="#666666"/><rect x="262" y="456" width="1" height="1" fill="#ffffff"/><rect x="263" y="457" width="1" height="1" fill="#666666"/><rect x="264" y="458" width="1" height="1" fill="#ffffff"/><rect x="265" y="459" width="1" height="1" fill="#666666"/><rect x="262" y="460" width="1" height="1" fill="#ffffff"/><rect x="263" y="461" width="1" height="1" fill="#666666"/><rect x="264" y="462" width="1" height="1" fill="#ffffff"/><rect x="265" y="463" width="1" height="1" fill="#666666"/><rect x="262" y="464" width="1" height="1" fill="#ffffff"/><rect x="263" y="465" width="1" height="1" fill="#666666"/><rect x="264" y="466" width="1" height="1" fill="#ffffff"/><rect x="265" y="467" width="1" height="1" fill="#666666"/><rect x="262" y="468" width="1" height="1" fill="#ffffff"/><rect x="263" y="469" width="1" height="1" fill="#666666"/><rect x="264" y="470" width="1" height="1" fill="#ffffff"/><rect x="265" y="471" width="1" height="1" fill="#666666"/><rect x="262" y="472" width="1" height="1" fill="#ffffff"/><rect x="263" y="473" width="1" height="1" fill="#666666"/><rect x="264" y="474" width="1" height="1" fill="#ffffff"/><rect x="265" y="475" width="1" height="1" fill="#666666"/><rect x="262" y="476" width="1" height="1" fill="#ffffff"/><rect x="263" y="477" width="1" height="1" fill="#666666"/><rect x="264" y="478" width="1" height="1" fill="#ffffff"/><rect x="265" y="479" width="1" height="1" fill="#666666"/><rect x="262" y="480" width="1" height="1" fill="#ffffff"/><rect x="263" y="481" width="1" height="1" fill="#666666"/><rect x="264" y="482" width="1" height="1" fill="#ffffff"/><rect x="265" y="483" width="1" height="1" fill="#666666"/><rect x="262" y="484" width="1" height="1" fill="#ffffff"/><rect x="263" y="485" width="1" height="1" fill="#666666"/><rect x="264" y="486" width="1" height="1" fill="#ffffff"/><rect x="265" y="487" width="1" height="1" fill="#666666"/><rect x="262" y="488" width="1" height="1" fill="#ffffff"/><rect x="263" y="489" width="1" height="1" fill="#666666"/><rect x="264" y="490" width="1" height="1" fill="#ffffff"/><rect x="265" y="491" width="1" height="1" fill="#666666"/><rect x="262" y="492" width="1" height="1" fill="#ffffff"/><rect x="263" y="493" width="1" height="1" fill="#666666"/><rect x="264" y="494" width="1" height="1" fill="#ffffff"/><rect x="265" y="495" width="1" height="1" fill="#666666"/><rect x="262" y="496" width="1" height="1" fill="#ffffff"/><rect x="263" y="497" width="1" height="1" fill="#666666"/><rect x="264" y="498" width="1" height="1" fill="#ffffff"/><rect x="265" y="499" width="1" height="1" fill="#666666"/><rect x="262" y="500" width="1" height="1" fill="#ffffff"/><rect x="263" y="501" width="1" height="1" fill="#666666"/><rect x="264" y="502" width="1" height="1" fill="#ffffff"/><rect x="265" y="503" width="1" height="1" fill="#666666"/><rect x="262" y="504" width="1" height="1" fill="#ffffff"/><rect x="263" y="505" width="1" height="1" fill="#666666"/><rect x="264" y="506" width="1" height="1" fill="#ffffff"/><rect x="265" y="507" width="1" height="1" fill="#666666"/><rect x="262" y="508" width="1" height="1" fill="#ffffff"/><rect x="263" y="509" width="1" height="1" fill="#666666"/><rect x="264" y="510" width="1" height="1" fill="#ffffff"/><rect x="265" y="511" width="1" height="1" fill="#666666"/><rect x="262" y="512" width="1" height="1" fill="#ffffff"/><rect x="263" y="513" width="1" height="1" fill="#666666"/><rect x="264" y="514" width="1" height="1" fill="#ffffff"/><rect x="265" y="515" width="1" height="1" fill="#666666"/><rect x="262" y="516" width="1" height="1" fill="#ffffff"/><rect x="263" y="517" width="1" height="1" fill="#666666"/><rect x="264" y="518" width="1" height="1" fill="#ffffff"/><rect x="265" y="519" width="1" height="1" fill="#666666"/><rect x="262" y="520" width="1" height="1" fill="#ffffff"/><rect x="263" y="521" width="1" height="1" fill="#666666"/><rect x="264" y="522" width="1" height="1" fill="#ffffff"/><rect x="265" y="523" width="1" height="1" fill="#666666"/><rect x="262" y="524" width="1" height="1" fill="#ffffff"/><rect x="263" y="525" width="1" height="1" fill="#666666"/><rect x="264" y="526" width="1" height="1" fill="#ffffff"/><rect x="265" y="527" width="1" height="1" fill="#666666"/><rect x="262" y="528" width="1" height="1" fill="#ffffff"/><rect x="263" y="529" width="1" height="1" fill="#666666"/><rect x="264" y="530" width="1" height="1" fill="#ffffff"/><rect x="265" y="531" width="1" height="1" fill="#666666"/><rect x="262" y="532" width="1" height="1" fill="#ffffff"/><rect x="263" y="533" width="1" height="1" fill="#666666"/><rect x="264" y="534" width="1" height="1" fill="#ffffff"/><rect x="265" y="535" width="1" height="1" fill="#666666"/><rect x="262" y="536" width="1" height="1" fill="#ffffff"/><rect x="263" y="537" width="1" height="1" fill="#666666"/><rect x="264" y="538" width="1" height="1" fill="#ffffff"/><rect x="265" y="539" width="1" height="1" fill="#666666"/><rect x="262" y="540" width="1" height="1" fill="#ffffff"/><rect x="263" y="541" width="1" height="1" fill="#666666"/><rect x="264" y="542" width="1" height="1" fill="#ffffff"/><rect x="265" y="543" width="1" height="1" fill="#666666"/><rect x="262" y="544" width="1" height="1" fill="#ffffff"/><rect x="263" y="545" width="1" height="1" fill="#666666"/><rect x="264" y="546" width="1" height="1" fill="#ffffff"/><rect x="265" y="547" width="1" height="1" fill="#666666"/><rect x="268" y="81" width="547" height="1" fill="#666666"/><rect x="268" y="81" width="1" height="470" fill="#666666"/><rect x="815" y="81" width="1" height="470" fill="#ffffff"/><rect x="269" y="550" width="547" height="1" fill="#ffffff"/><rect x="271" y="90" width="542" height="1" fill="#8e8e8e"/><rect x="271" y="90" width="1" height="458" fill="#8e8e8e"/><rect x="271" y="547" width="542" height="1" fill="#8e8e8e"/><rect x="812" y="90" width="1" height="458" fill="#8e8e8e"/><rect x="277" y="87" width="123" height="6" fill="#cccccc"/><rect x="276" y="111" width="532" height="1" fill="#8e8e8e"/><rect x="276" y="111" width="1" height="90" fill="#8e8e8e"/><rect x="276" y="200" width="532" height="1" fill="#8e8e8e"/><rect x="807" y="111" width="1" height="90" fill="#8e8e8e"/><rect x="282" y="108" width="135" height="6" fill="#cccccc"/><rect x="279" y="148" width="233" height="1" fill="#666666"/><rect x="279" y="148" width="1" height="19" fill="#666666"/><rect x="279" y="166" width="233" height="1" fill="#666666"/><rect x="511" y="148" width="1" height="19" fill="#666666"/><rect x="280" y="149" width="233" height="1" fill="#ffffff"/><rect x="280" y="149" width="1" height="19" fill="#ffffff"/><rect x="280" y="167" width="233" height="1" fill="#ffffff"/><rect x="512" y="149" width="1" height="19" fill="#ffffff"/><rect x="279" y="167" width="1" height="1" fill="#cccccc"/><rect x="512" y="148" width="1" height="1" fill="#cccccc"/><rect x="513" y="148" width="58" height="1" fill="#666666"/><rect x="513" y="148" width="1" height="19" fill="#666666"/><rect x="513" y="166" width="58" height="1" fill="#666666"/><rect x="570" y="148" width="1" height="19" fill="#666666"/><rect x="514" y="149" width="58" height="1" fill="#ffffff"/><rect x="514" y="149" width="1" height="19" fill="#ffffff"/><rect x="514" y="167" width="58" height="1" fill="#ffffff"/><rect x="571" y="149" width="1" height="19" fill="#ffffff"/><rect x="513" y="167" width="1" height="1" fill="#cccccc"/><rect x="571" y="148" width="1" height="1" fill="#cccccc"/><rect x="572" y="148" width="232" height="1" fill="#666666"/><rect x="572" y="148" width="1" height="19" fill="#666666"/><rect x="572" y="166" width="232" height="1" fill="#666666"/><rect x="803" y="148" width="1" height="19" fill="#666666"/><rect x="573" y="149" width="232" height="1" fill="#ffffff"/><rect x="573" y="149" width="1" height="19" fill="#ffffff"/><rect x="573" y="167" width="232" height="1" fill="#ffffff"/><rect x="804" y="149" width="1" height="19" fill="#ffffff"/><rect x="572" y="167" width="1" height="1" fill="#cccccc"/><rect x="804" y="148" width="1" height="1" fill="#cccccc"/><rect x="496" y="155" width="10" height="1" fill="#000"/><rect x="497" y="156" width="8" height="1" fill="#000"/><rect x="498" y="157" width="6" height="1" fill="#000"/><rect x="499" y="158" width="4" height="1" fill="#000"/><rect x="500" y="159" width="2" height="1" fill="#000"/><rect x="555" y="155" width="10" height="1" fill="#000"/><rect x="556" y="156" width="8" height="1" fill="#000"/><rect x="557" y="157" width="6" height="1" fill="#000"/><rect x="558" y="158" width="4" height="1" fill="#000"/><rect x="559" y="159" width="2" height="1" fill="#000"/><rect x="790" y="155" width="10" height="1" fill="#000"/><rect x="791" y="156" width="8" height="1" fill="#000"/><rect x="792" y="157" width="6" height="1" fill="#000"/><rect x="793" y="158" width="4" height="1" fill="#000"/><rect x="794" y="159" width="2" height="1" fill="#000"/><rect x="542" y="170" width="79" height="1" fill="#666666"/><rect x="542" y="170" width="1" height="26" fill="#666666"/><rect x="542" y="195" width="79" height="1" fill="#666666"/><rect x="620" y="170" width="1" height="26" fill="#666666"/><rect x="543" y="171" width="79" height="1" fill="#ffffff"/><rect x="543" y="171" width="1" height="26" fill="#ffffff"/><rect x="543" y="196" width="79" height="1" fill="#ffffff"/><rect x="621" y="171" width="1" height="26" fill="#ffffff"/><rect x="542" y="196" width="1" height="1" fill="#cccccc"/><rect x="621" y="170" width="1" height="1" fill="#cccccc"/><rect x="558" y="174" width="31" height="19" fill="none"/><rect x="558.5" y="174.5" width="30" height="18" fill="none" stroke="#9999cc" stroke-width="1"/><rect x="274" y="220" width="535" height="1" fill="#666666"/><rect x="274" y="220" width="1" height="294" fill="#666666"/><rect x="274" y="513" width="535" height="1" fill="#666666"/><rect x="808" y="220" width="1" height="294" fill="#666666"/><rect x="809" y="221" width="1" height="294" fill="#ffffff"/><rect x="275" y="514" width="535" height="1" fill="#ffffff"/><rect x="275" y="221" width="533" height="292" fill="#cccccc"/><rect x="275" y="221" width="41" height="1" fill="#ffffff"/><rect x="275" y="221" width="1" height="16" fill="#ffffff"/><rect x="315" y="221" width="1" height="16" fill="#666666"/><rect x="316" y="221" width="206" height="1" fill="#ffffff"/><rect x="316" y="221" width="1" height="16" fill="#ffffff"/><rect x="521" y="221" width="1" height="16" fill="#666666"/><rect x="522" y="221" width="81" height="1" fill="#ffffff"/><rect x="522" y="221" width="1" height="16" fill="#ffffff"/><rect x="602" y="221" width="1" height="16" fill="#666666"/><rect x="603" y="221" width="205" height="1" fill="#ffffff"/><rect x="603" y="221" width="1" height="16" fill="#ffffff"/><rect x="807" y="221" width="1" height="16" fill="#666666"/><rect x="275" y="236" width="533" height="1" fill="#666666"/><rect x="275" y="237" width="533" height="171" fill="#ffffff"/><rect x="275" y="254" width="533" height="1" fill="#999999"/><g transform="translate(286,238)">
<polygon points="0,0 18,0 9,8" fill="#20c4b8"/>
<polygon points="0,0 0,16 9,8" fill="#1a8c8c"/>
<polygon points="18,0 18,16 9,8" fill="#2a9c9c"/>
<polygon points="0,16 18,16 9,8" fill="#127a7a"/>
<line x1="0.5" y1="0.5" x2="17.5" y2="15.5" stroke="#ffffff" stroke-width="1" opacity="0.8" shape-rendering="auto"/>
<line x1="17.5" y1="0.5" x2="0.5" y2="15.5" stroke="#ffffff" stroke-width="1" opacity="0.8" shape-rendering="auto"/>
<rect x="8" y="7" width="2" height="2" fill="#fff"/>
</g><rect x="275" y="271" width="533" height="1" fill="#999999"/><g transform="translate(286,255)">
<polygon points="0,0 18,0 9,8" fill="#20c4b8"/>
<polygon points="0,0 0,16 9,8" fill="#1a8c8c"/>
<polygon points="18,0 18,16 9,8" fill="#2a9c9c"/>
<polygon points="0,16 18,16 9,8" fill="#127a7a"/>
<line x1="0.5" y1="0.5" x2="17.5" y2="15.5" stroke="#ffffff" stroke-width="1" opacity="0.8" shape-rendering="auto"/>
<line x1="17.5" y1="0.5" x2="0.5" y2="15.5" stroke="#ffffff" stroke-width="1" opacity="0.8" shape-rendering="auto"/>
<rect x="8" y="7" width="2" height="2" fill="#fff"/>
</g><rect x="275" y="288" width="533" height="1" fill="#999999"/><g transform="translate(286,272)">
<polygon points="0,0 18,0 9,8" fill="#20c4b8"/>
<polygon points="0,0 0,16 9,8" fill="#1a8c8c"/>
<polygon points="18,0 18,16 9,8" fill="#2a9c9c"/>
<polygon points="0,16 18,16 9,8" fill="#127a7a"/>
<line x1="0.5" y1="0.5" x2="17.5" y2="15.5" stroke="#ffffff" stroke-width="1" opacity="0.8" shape-rendering="auto"/>
<line x1="17.5" y1="0.5" x2="0.5" y2="15.5" stroke="#ffffff" stroke-width="1" opacity="0.8" shape-rendering="auto"/>
<rect x="8" y="7" width="2" height="2" fill="#fff"/>
</g><rect x="275" y="305" width="533" height="1" fill="#999999"/><g transform="translate(286,289)">
<polygon points="0,0 18,0 9,8" fill="#20c4b8"/>
<polygon points="0,0 0,16 9,8" fill="#1a8c8c"/>
<polygon points="18,0 18,16 9,8" fill="#2a9c9c"/>
<polygon points="0,16 18,16 9,8" fill="#127a7a"/>
<line x1="0.5" y1="0.5" x2="17.5" y2="15.5" stroke="#ffffff" stroke-width="1" opacity="0.8" shape-rendering="auto"/>
<line x1="17.5" y1="0.5" x2="0.5" y2="15.5" stroke="#ffffff" stroke-width="1" opacity="0.8" shape-rendering="auto"/>
<rect x="8" y="7" width="2" height="2" fill="#fff"/>
</g><rect x="275" y="322" width="533" height="1" fill="#999999"/><g transform="translate(286,306)">
<polygon points="0,0 18,0 9,8" fill="#20c4b8"/>
<polygon points="0,0 0,16 9,8" fill="#1a8c8c"/>
<polygon points="18,0 18,16 9,8" fill="#2a9c9c"/>
<polygon points="0,16 18,16 9,8" fill="#127a7a"/>
<line x1="0.5" y1="0.5" x2="17.5" y2="15.5" stroke="#ffffff" stroke-width="1" opacity="0.8" shape-rendering="auto"/>
<line x1="17.5" y1="0.5" x2="0.5" y2="15.5" stroke="#ffffff" stroke-width="1" opacity="0.8" shape-rendering="auto"/>
<rect x="8" y="7" width="2" height="2" fill="#fff"/>
</g><rect x="275" y="322" width="533" height="17" fill="#ccccff"/><rect x="275" y="339" width="533" height="1" fill="#999999"/><g transform="translate(286,323)">
<polygon points="0,0 18,0 9,8" fill="#f81444"/>
<polygon points="0,0 0,16 9,8" fill="#cc3388"/>
<polygon points="18,0 18,16 9,8" fill="#e01818"/>
<polygon points="0,16 18,16 9,8" fill="#a81040"/>
<line x1="0.5" y1="0.5" x2="17.5" y2="15.5" stroke="#ffffff" stroke-width="1" opacity="0.8" shape-rendering="auto"/>
<line x1="17.5" y1="0.5" x2="0.5" y2="15.5" stroke="#ffffff" stroke-width="1" opacity="0.8" shape-rendering="auto"/>
<rect x="8" y="7" width="2" height="2" fill="#fff"/>
</g><rect x="275" y="356" width="533" height="1" fill="#999999"/><g transform="translate(286,340)">
<polygon points="0,0 18,0 9,8" fill="#20c4b8"/>
<polygon points="0,0 0,16 9,8" fill="#1a8c8c"/>
<polygon points="18,0 18,16 9,8" fill="#2a9c9c"/>
<polygon points="0,16 18,16 9,8" fill="#127a7a"/>
<line x1="0.5" y1="0.5" x2="17.5" y2="15.5" stroke="#ffffff" stroke-width="1" opacity="0.8" shape-rendering="auto"/>
<line x1="17.5" y1="0.5" x2="0.5" y2="15.5" stroke="#ffffff" stroke-width="1" opacity="0.8" shape-rendering="auto"/>
<rect x="8" y="7" width="2" height="2" fill="#fff"/>
</g><rect x="275" y="356" width="533" height="17" fill="#ccccff"/><rect x="275" y="373" width="533" height="1" fill="#999999"/><g transform="translate(286,357)">
<polygon points="0,0 18,0 9,8" fill="#f81444"/>
<polygon points="0,0 0,16 9,8" fill="#cc3388"/>
<polygon points="18,0 18,16 9,8" fill="#e01818"/>
<polygon points="0,16 18,16 9,8" fill="#a81040"/>
<line x1="0.5" y1="0.5" x2="17.5" y2="15.5" stroke="#ffffff" stroke-width="1" opacity="0.8" shape-rendering="auto"/>
<line x1="17.5" y1="0.5" x2="0.5" y2="15.5" stroke="#ffffff" stroke-width="1" opacity="0.8" shape-rendering="auto"/>
<rect x="8" y="7" width="2" height="2" fill="#fff"/>
</g><rect x="275" y="390" width="533" height="1" fill="#999999"/><g transform="translate(286,374)">
<polygon points="0,0 18,0 9,8" fill="#20c4b8"/>
<polygon points="0,0 0,16 9,8" fill="#1a8c8c"/>
<polygon points="18,0 18,16 9,8" fill="#2a9c9c"/>
<polygon points="0,16 18,16 9,8" fill="#127a7a"/>
<line x1="0.5" y1="0.5" x2="17.5" y2="15.5" stroke="#ffffff" stroke-width="1" opacity="0.8" shape-rendering="auto"/>
<line x1="17.5" y1="0.5" x2="0.5" y2="15.5" stroke="#ffffff" stroke-width="1" opacity="0.8" shape-rendering="auto"/>
<rect x="8" y="7" width="2" height="2" fill="#fff"/>
</g><rect x="275" y="407" width="533" height="1" fill="#999999"/><g transform="translate(286,391)">
<polygon points="0,0 18,0 9,8" fill="#20c4b8"/>
<polygon points="0,0 0,16 9,8" fill="#1a8c8c"/>
<polygon points="18,0 18,16 9,8" fill="#2a9c9c"/>
<polygon points="0,16 18,16 9,8" fill="#127a7a"/>
<line x1="0.5" y1="0.5" x2="17.5" y2="15.5" stroke="#ffffff" stroke-width="1" opacity="0.8" shape-rendering="auto"/>
<line x1="17.5" y1="0.5" x2="0.5" y2="15.5" stroke="#ffffff" stroke-width="1" opacity="0.8" shape-rendering="auto"/>
<rect x="8" y="7" width="2" height="2" fill="#fff"/>
</g><rect x="315" y="237" width="1" height="171" fill="#999999"/><rect x="521" y="237" width="1" height="171" fill="#999999"/><rect x="602" y="237" width="1" height="171" fill="#999999"/><rect x="807" y="237" width="1" height="171" fill="#999999"/><rect x="341" y="516" width="90" height="1" fill="#666666"/><rect x="341" y="516" width="1" height="25" fill="#666666"/><rect x="341" y="540" width="90" height="1" fill="#666666"/><rect x="430" y="516" width="1" height="25" fill="#666666"/><rect x="342" y="517" width="90" height="1" fill="#ffffff"/><rect x="342" y="517" width="1" height="25" fill="#ffffff"/><rect x="342" y="541" width="90" height="1" fill="#ffffff"/><rect x="431" y="517" width="1" height="25" fill="#ffffff"/><rect x="341" y="541" width="1" height="1" fill="#cccccc"/><rect x="431" y="516" width="1" height="1" fill="#cccccc"/><rect x="399" y="554" width="220" height="1" fill="#666666"/><rect x="399" y="554" width="1" height="42" fill="#666666"/><rect x="399" y="595" width="220" height="1" fill="#666666"/><rect x="618" y="554" width="1" height="42" fill="#666666"/><rect x="400" y="555" width="220" height="1" fill="#ffffff"/><rect x="400" y="555" width="1" height="42" fill="#ffffff"/><rect x="400" y="596" width="220" height="1" fill="#ffffff"/><rect x="619" y="555" width="1" height="42" fill="#ffffff"/><rect x="399" y="596" width="1" height="1" fill="#cccccc"/><rect x="619" y="554" width="1" height="1" fill="#cccccc"/><g transform="translate(416,559)"><rect x="0" y="0" width="32" height="32" fill="#0000aa"/><rect x="1" y="1" width="30" height="30" fill="url(#ydith)"/><rect x="1" y="3" width="30" height="1" fill="#000"/><rect x="6" y="4" width="1" height="5" fill="#000"/><rect x="1" y="12" width="2" height="1" fill="#000"/><rect x="3" y="9" width="7" height="6" fill="#000"/><rect x="4" y="10" width="5" height="4" fill="#b8c8c8"/><rect x="6" y="15" width="1" height="4" fill="#000"/><rect x="4" y="19" width="23" height="1" fill="#000"/><rect x="4" y="20" width="1" height="3" fill="#000"/><rect x="2" y="23" width="5" height="4" fill="#000"/><rect x="3" y="24" width="3" height="2" fill="#fff"/><rect x="11" y="20" width="1" height="3" fill="#000"/><rect x="9" y="23" width="5" height="4" fill="#000"/><rect x="10" y="24" width="3" height="2" fill="#fff"/><rect x="18" y="20" width="1" height="3" fill="#000"/><rect x="16" y="23" width="5" height="4" fill="#000"/><rect x="17" y="24" width="3" height="2" fill="#fff"/><rect x="26" y="20" width="1" height="2" fill="#000"/><rect x="23" y="22" width="7" height="6" fill="#000"/><rect x="24" y="23" width="5" height="4" fill="#b8c8c8"/><rect x="26" y="28" width="1" height="3" fill="#000"/><rect x="22" y="4" width="1" height="3" fill="#000"/><rect x="18" y="7" width="9" height="1" fill="#000"/><rect x="18" y="8" width="1" height="2" fill="#000"/><rect x="16" y="10" width="5" height="4" fill="#000"/><rect x="17" y="11" width="3" height="2" fill="#fff"/><rect x="26" y="8" width="1" height="2" fill="#000"/><rect x="24" y="10" width="5" height="4" fill="#000"/><rect x="25" y="11" width="3" height="2" fill="#fff"/></g><rect x="5" y="620" width="125" height="1" fill="#666666"/><rect x="5" y="620" width="1" height="19" fill="#666666"/><rect x="5" y="638" width="125" height="1" fill="#666666"/><rect x="129" y="620" width="1" height="19" fill="#666666"/><rect x="6" y="621" width="125" height="1" fill="#ffffff"/><rect x="6" y="621" width="1" height="19" fill="#ffffff"/><rect x="6" y="639" width="125" height="1" fill="#ffffff"/><rect x="130" y="621" width="1" height="19" fill="#ffffff"/><rect x="5" y="639" width="1" height="1" fill="#cccccc"/><rect x="130" y="620" width="1" height="1" fill="#cccccc"/><rect x="219" y="620" width="100" height="1" fill="#666666"/><rect x="219" y="620" width="1" height="19" fill="#666666"/><rect x="219" y="638" width="100" height="1" fill="#666666"/><rect x="318" y="620" width="1" height="19" fill="#666666"/><rect x="220" y="621" width="100" height="1" fill="#ffffff"/><rect x="220" y="621" width="1" height="19" fill="#ffffff"/><rect x="220" y="639" width="100" height="1" fill="#ffffff"/><rect x="319" y="621" width="1" height="19" fill="#ffffff"/><rect x="219" y="639" width="1" height="1" fill="#cccccc"/><rect x="319" y="620" width="1" height="1" fill="#cccccc"/><rect x="764" y="620" width="68" height="1" fill="#666666"/><rect x="764" y="620" width="1" height="19" fill="#666666"/><rect x="764" y="638" width="68" height="1" fill="#666666"/><rect x="831" y="620" width="1" height="19" fill="#666666"/><rect x="765" y="621" width="68" height="1" fill="#ffffff"/><rect x="765" y="621" width="1" height="19" fill="#ffffff"/><rect x="765" y="639" width="68" height="1" fill="#ffffff"/><rect x="832" y="621" width="1" height="19" fill="#ffffff"/><rect x="764" y="639" width="1" height="1" fill="#cccccc"/><rect x="832" y="620" width="1" height="1" fill="#cccccc"/><g filter="url(#crisp)"><text x="214.61" y="23" font-size="17" font-weight="normal" fill="#ffffff" letter-spacing="-0.250" transform="translate(216.00,0) scale(0.9645,1) translate(-216.00,0)">MOMIS</text><text x="274.93" y="23" font-size="17" font-weight="normal" fill="#ffffff" letter-spacing="0.533">Source</text><text x="336.23" y="23" font-size="17" font-weight="normal" fill="#ffffff" letter-spacing="0.621">Integrator</text><text x="421.31" y="23" font-size="17" font-weight="normal" fill="#ffffff" letter-spacing="0.763">Designer</text><text x="518.19" y="23" font-size="17" font-weight="normal" fill="#ffffff" letter-spacing="0.613">University</text><text x="13.63" y="47" font-size="13" font-weight="bold" fill="#000" letter-spacing="-0.250" transform="translate(14.00,0) scale(0.9947,1) translate(-14.00,0)">SAM</text><text x="53.63" y="47" font-size="13" font-weight="bold" fill="#000" letter-spacing="0.564">SLIM</text><text x="98.13" y="47" font-size="13" font-weight="bold" fill="#000" letter-spacing="0.551">EXTM Relations</text><text x="216.13" y="47" font-size="13" font-weight="bold" fill="#000" letter-spacing="0.634">EXTM Hierarchy</text><text x="334.85" y="47" font-size="13" font-weight="bold" fill="#000" letter-spacing="0.964">TUNIM</text><text x="14.63" y="73" font-size="13" font-weight="bold" fill="#000" letter-spacing="0.863">Input Rules</text><text x="87.13" y="519" font-size="13" font-weight="bold" fill="#666699" letter-spacing="0.580">Reference Global Class</text><text x="92.22" y="540" font-size="13" font-weight="bold" fill="#000" letter-spacing="0.808">University_Person</text><text x="278.13" y="94" font-size="13" font-weight="bold" fill="#666699" letter-spacing="0.589">Extensional Rules</text><text x="282.63" y="115" font-size="13" font-weight="bold" fill="#666699" letter-spacing="0.813">New rule data input</text><text x="330.63" y="139" font-size="13" font-weight="bold" fill="#666699" letter-spacing="0.523">First Class</text><text x="509.93" y="139" font-size="13" font-weight="bold" fill="#666699" letter-spacing="0.650">Rule type</text><text x="671.43" y="139" font-size="13" font-weight="bold" fill="#666699" letter-spacing="0.350">Second Class</text><text x="285.05" y="161" font-size="13" font-weight="bold" fill="#000" letter-spacing="0.620">Tax_Position.Un_Student</text><text x="518.53" y="161" font-size="13" font-weight="bold" fill="#000" letter-spacing="-0.250" transform="translate(519.40,0) scale(0.9820,1) translate(-519.40,0)">ISA</text><text x="578.47" y="161" font-size="13" font-weight="bold" fill="#000" letter-spacing="0.464">Computer_Science.CS_Person</text><text x="559.68" y="187" font-size="13" font-weight="bold" fill="#000" letter-spacing="-0.047">ADD</text><text x="401.53" y="215" font-size="13" font-weight="bold" fill="#ff0000" letter-spacing="0.210">EXTENSIONAL RELATIONS</text><text x="358.73" y="533" font-size="13" font-weight="bold" fill="#000" letter-spacing="0.127">REMOVE</text><text x="452.83" y="579" font-size="13" font-weight="bold" fill="#000" letter-spacing="0.674">Extensional Hierarchy</text><text x="5.83" y="612" font-size="13" font-weight="bold" fill="#ffffff" letter-spacing="0.495">NO CONNECTION</text><text x="22.23" y="634" font-size="13" font-weight="bold" fill="#000" letter-spacing="0.167">SAVE TO FILE</text><text x="237.07" y="634" font-size="13" font-weight="bold" fill="#000" letter-spacing="0.133">CONNECT</text><text x="782.47" y="634" font-size="13" font-weight="bold" fill="#000" letter-spacing="0.873">QUIT</text></g><g filter="url(#crisp2)"><text x="30.85" y="96" font-size="13" font-weight="normal" fill="#000" letter-spacing="0.084">Global Class</text><text x="51.50" y="114" font-size="13" font-weight="normal" fill="#000" letter-spacing="0.366">University_Person</text><text x="318.34" y="250" font-size="13" font-weight="normal" fill="#000" letter-spacing="0.154">Computer_Science.Location</text><text x="523.80" y="250" font-size="13" font-weight="normal" fill="#000" letter-spacing="-0.250" transform="translate(525.00,0) scale(0.9049,1) translate(-525.00,0)">ISA</text><text x="605.14" y="250" font-size="13" font-weight="normal" fill="#000" letter-spacing="0.273">Computer_Science.Student</text><text x="318.34" y="267" font-size="13" font-weight="normal" fill="#000" letter-spacing="0.154">Computer_Science.Location</text><text x="523.80" y="267" font-size="13" font-weight="normal" fill="#000" letter-spacing="-0.250" transform="translate(525.00,0) scale(0.9049,1) translate(-525.00,0)">ISA</text><text x="604.80" y="267" font-size="13" font-weight="normal" fill="#000" letter-spacing="0.295">University.School_Member</text><text x="318.00" y="284" font-size="13" font-weight="normal" fill="#000" letter-spacing="0.291">University.School_Member</text><text x="523.80" y="284" font-size="13" font-weight="normal" fill="#000" letter-spacing="-0.250" transform="translate(525.00,0) scale(0.9049,1) translate(-525.00,0)">ISA</text><text x="605.14" y="284" font-size="13" font-weight="normal" fill="#000" letter-spacing="0.054">Computer_Science.CS_Person</text><text x="318.34" y="301" font-size="13" font-weight="normal" fill="#000" letter-spacing="0.116">Computer_Science.Course</text><text x="523.80" y="301" font-size="13" font-weight="normal" fill="#000" letter-spacing="-0.250" transform="translate(525.00,0) scale(0.9049,1) translate(-525.00,0)">ISA</text><text x="605.14" y="301" font-size="13" font-weight="normal" fill="#000" letter-spacing="0.127">Computer_Science.Professor</text><text x="318.34" y="318" font-size="13" font-weight="normal" fill="#000" letter-spacing="0.116">Computer_Science.Course</text><text x="523.80" y="318" font-size="13" font-weight="normal" fill="#000" letter-spacing="-0.250" transform="translate(525.00,0) scale(0.9049,1) translate(-525.00,0)">ISA</text><text x="605.14" y="318" font-size="13" font-weight="normal" fill="#000" letter-spacing="0.273">Computer_Science.Student</text><text x="318.71" y="335" font-size="13" font-weight="normal" fill="#000" letter-spacing="0.330">Tax_Position.Un_Student</text><text x="523.93" y="335" font-size="13" font-weight="normal" fill="#000" letter-spacing="-0.250" transform="translate(525.00,0) scale(0.9862,1) translate(-525.00,0)">BOTTOM</text><text x="605.14" y="335" font-size="13" font-weight="normal" fill="#000" letter-spacing="0.054">Computer_Science.CS_Person</text><text x="318.00" y="352" font-size="13" font-weight="normal" fill="#000" letter-spacing="0.242">University.Research_Staff</text><text x="523.93" y="352" font-size="13" font-weight="normal" fill="#000" letter-spacing="-0.250" transform="translate(525.00,0) scale(0.9531,1) translate(-525.00,0)">EQU</text><text x="605.14" y="352" font-size="13" font-weight="normal" fill="#000" letter-spacing="0.054">Computer_Science.CS_Person</text><text x="318.71" y="369" font-size="13" font-weight="normal" fill="#000" letter-spacing="0.330">Tax_Position.Un_Student</text><text x="523.80" y="369" font-size="13" font-weight="normal" fill="#000" letter-spacing="-0.250" transform="translate(525.00,0) scale(0.9049,1) translate(-525.00,0)">ISA</text><text x="605.14" y="369" font-size="13" font-weight="normal" fill="#000" letter-spacing="0.054">Computer_Science.CS_Person</text><text x="318.34" y="386" font-size="13" font-weight="normal" fill="#000" letter-spacing="0.260">Computer_Science.Student</text><text x="523.93" y="386" font-size="13" font-weight="normal" fill="#000" letter-spacing="-0.250" transform="translate(525.00,0) scale(0.9531,1) translate(-525.00,0)">EQU</text><text x="605.14" y="386" font-size="13" font-weight="normal" fill="#000" letter-spacing="0.054">Computer_Science.CS_Person</text><text x="318.34" y="403" font-size="13" font-weight="normal" fill="#000" letter-spacing="0.260">Computer_Science.Student</text><text x="523.93" y="403" font-size="13" font-weight="normal" fill="#000" letter-spacing="-0.250" transform="translate(525.00,0) scale(0.9531,1) translate(-525.00,0)">EQU</text><text x="605.14" y="403" font-size="13" font-weight="normal" fill="#000" letter-spacing="0.127">Computer_Science.Professor</text><text x="285.98" y="233" font-size="13" font-weight="normal" fill="#000" letter-spacing="-0.021">OK</text><text x="388.93" y="233" font-size="13" font-weight="normal" fill="#000" letter-spacing="0.015">First Class</text><text x="548.21" y="233" font-size="13" font-weight="normal" fill="#000" letter-spacing="0.023">Type</text><text x="666.01" y="233" font-size="13" font-weight="normal" fill="#000" letter-spacing="-0.159">Second Class</text></g></svg></body></html>
